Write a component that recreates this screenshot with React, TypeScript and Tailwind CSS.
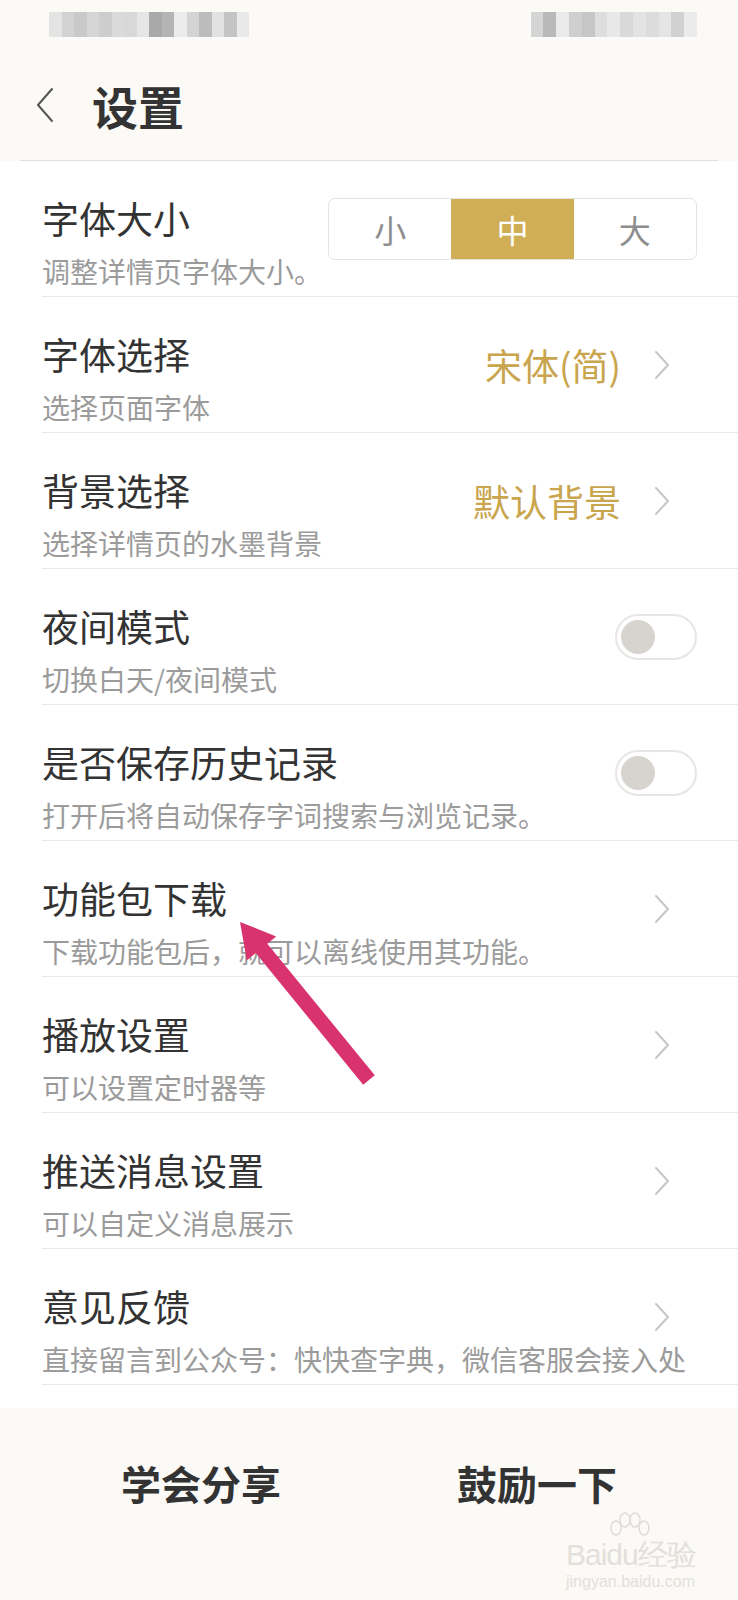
import type { ReactNode } from 'react';

const leftMosaic = ['#e4e4e4', '#d2d2d2', '#c9c9c9', '#d6d6d6', '#cdcdcd', '#dadada', '#d8d8d8', '#e6e6e6', '#a9a9a9', '#b4b4b4', '#ececec', '#d4d4d4', '#bcbcbc', '#e2e2e2', '#c4c4c4', '#e9e9e9'];
const rightMosaic = ['#d5d5d5', '#b9b9b9', '#eaeaea', '#cfcfcf', '#c6c6c6', '#dedede', '#e8e8e8', '#d9d9d9', '#e3e3e3', '#dcdcdc', '#e5e5e5', '#d1d1d1', '#ebebeb'];

function Chevron() {
  return (
    <svg width="16" height="30" viewBox="0 0 16 30" fill="none">
      <path d="M2 2 L14 15 L2 28" stroke="#c6c6c6" strokeWidth="2" strokeLinecap="round" strokeLinejoin="round" />
    </svg>
  );
}

function Toggle() {
  return (
    <div className="w-[82px] h-[46px] rounded-full border-2 border-[#e8e6e4] bg-white flex items-center pl-[4px]">
      <div className="w-[34px] h-[34px] rounded-full bg-[#d7d3cf]" />
    </div>
  );
}

function Row({ title, desc, right, wide }: { title: string; desc: string; right: ReactNode; wide?: boolean }) {
  return (
    <div className="pl-[42px]">
      <div className={`h-[136px] border-b border-[#e9e9e9] flex justify-between ${wide ? 'pr-[68px]' : 'pr-[41px]'}`}>
        <div className="flex-1 min-w-0 pt-[35px] whitespace-nowrap">
          <div className="text-[37px] leading-[44px] text-[#333333]">{title}</div>
          <div className="mt-[14px] text-[28px] leading-[34px] text-[#9b9b9b]">{desc}</div>
        </div>
        <div className="shrink-0 self-center flex items-center">{right}</div>
      </div>
    </div>
  );
}

function Value({ text }: { text: string }) {
  return (
    <>
      <span className="text-[37px] leading-[44px] text-[#c9a54e] mr-[33px]">{text}</span>
      <Chevron />
    </>
  );
}

export default function App() {
  return (
    <div className="relative w-[738px] min-h-[1600px] bg-white font-['Noto_Sans_CJK_SC','Noto_Sans',sans-serif]">
      {/* Header */}
      <div className="bg-[#fbfaf7]">
        <div className="h-[50px] pt-[12px] flex justify-between px-[41px] pl-[49px]">
          <div className="flex h-[25px]">
            {leftMosaic.map((c, i) => (
              <div key={i} className="w-[12.5px] h-full" style={{ backgroundColor: c }} />
            ))}
          </div>
          <div className="flex h-[25px]">
            {rightMosaic.map((c, i) => (
              <div key={i} className="w-[12.8px] h-full" style={{ backgroundColor: c }} />
            ))}
          </div>
        </div>
        <div className="h-[110px] flex items-center pl-[35px]">
          <svg width="20" height="36" viewBox="0 0 20 36" fill="none">
            <path d="M17 2 L3 18 L17 34" stroke="#555555" strokeWidth="2" strokeLinecap="round" strokeLinejoin="round" />
          </svg>
          <h1 className="ml-[37px] text-[46px] leading-[52px] font-bold text-[#333333] font-['Noto_Sans_CJK_SC',serif]">设置</h1>
        </div>
        <div className="mx-[20px] border-b border-[#e2e0dc]" />
      </div>

      {/* Settings list */}
      <div className="pb-[23px]">
        <Row
          title="字体大小"
          desc="调整详情页字体大小。"
          right={
            <div className="w-[369px] h-[62px] border border-[#e3e3e3] rounded-[7px] overflow-hidden grid grid-cols-3 text-[32px]">
              <div className="flex items-center justify-center text-[#8e8e8e]">小</div>
              <div className="flex items-center justify-center bg-[#cfae55] text-white">中</div>
              <div className="flex items-center justify-center text-[#8e8e8e]">大</div>
            </div>
          }
        />
        <Row title="字体选择" desc="选择页面字体" right={<Value text="宋体(简)" />} wide />
        <Row title="背景选择" desc="选择详情页的水墨背景" right={<Value text="默认背景" />} wide />
        <Row title="夜间模式" desc="切换白天/夜间模式" right={<Toggle />} />
        <Row title="是否保存历史记录" desc="打开后将自动保存字词搜索与浏览记录。" right={<Toggle />} />
        <Row title="功能包下载" desc="下载功能包后，就可以离线使用其功能。" right={<Chevron />} wide />
        <Row title="播放设置" desc="可以设置定时器等" right={<Chevron />} wide />
        <Row title="推送消息设置" desc="可以自定义消息展示" right={<Chevron />} wide />
        <Row title="意见反馈" desc="直接留言到公众号：快快查字典，微信客服会接入处" right={<Chevron />} wide />
      </div>

      {/* Bottom actions */}
      <div className="relative h-[192px] bg-[#fbfaf7] grid grid-cols-2 px-[33px] pt-[51px]">
        <div className="text-center text-[40px] leading-[48px] font-bold text-[#333333]">学会分享</div>
        <div className="text-center text-[40px] leading-[48px] font-bold text-[#333333]">鼓励一下</div>
        <div className="absolute left-[566px] top-[104px] text-[#e3e0db] leading-none">
          <svg className="ml-[40px]" width="48" height="28" viewBox="0 0 48 28" fill="none" stroke="#e0ddd8" strokeWidth="1.5">
            <ellipse cx="10" cy="16" rx="5" ry="7" />
            <ellipse cx="19" cy="8" rx="5" ry="7" />
            <ellipse cx="29" cy="8" rx="5" ry="7" />
            <ellipse cx="38" cy="16" rx="5" ry="7" />
          </svg>
          <div className="text-[30px] font-['Liberation_Sans',sans-serif] tracking-[-1px]">Baidu经验</div>
          <div className="mt-[4px] text-[16px] font-['Liberation_Sans',sans-serif]">jingyan.baidu.com</div>
        </div>
      </div>

      {/* Annotation arrow */}
      <svg className="absolute left-0 top-0 pointer-events-none" width="738" height="1600" viewBox="0 0 738 1600">
        <polygon
          points="240,922 276.2,936.4 267.3,943.7 374.8,1075.3 363.2,1084.7 255.7,953.1 246.8,960.4"
          fill="#d9336f"
        />
      </svg>
    </div>
  );
}
